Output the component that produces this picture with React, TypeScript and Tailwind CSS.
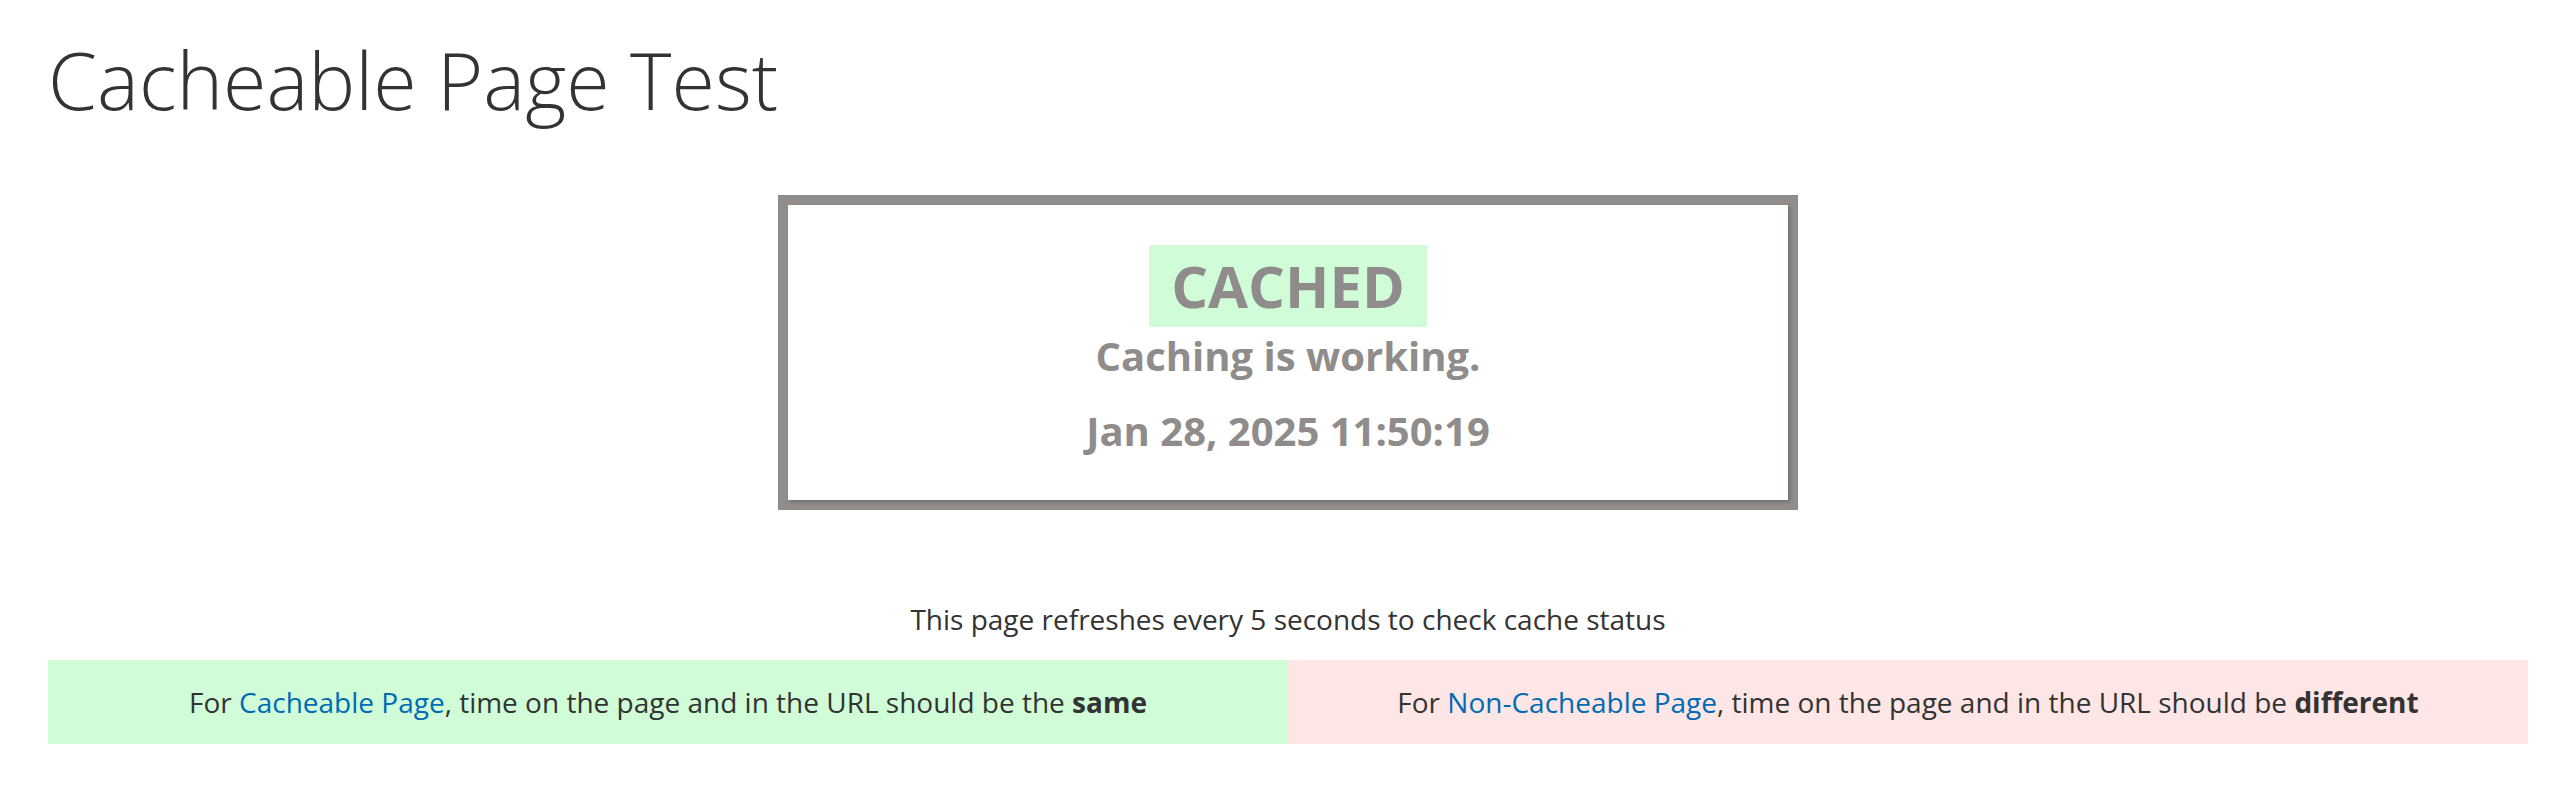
export default function App() {
  return (
    <div className="min-h-screen bg-white pl-[48px] pr-[42px] pt-[36px] font-['Open_Sans','Liberation_Sans',sans-serif] text-[#333333]">
      <h1 className="text-[79px] leading-[88px] font-light">Cacheable Page Test</h1>

      {/* status box */}
      <div className="mx-auto mt-[71px] w-[1020px] bg-[#918d8b] p-[10px]">
        <div className="flex flex-col items-center bg-white pt-[40px] pb-[45px] text-[#8f8c8b] font-bold shadow-[2px_2px_4px_rgba(0,0,0,0.22)]">
          <div className="bg-[#d0fdd8] px-[22px] text-[58px] leading-[82px]">CACHED</div>
          <div className="mt-[5px] text-[40px] leading-[48px]">Caching is working.</div>
          <div className="mt-[27px] text-[40px] leading-[48px]">Jan 28, 2025 11:50:19</div>
        </div>
      </div>

      <p className="mt-[89px] text-center text-[28px] leading-[40px]">
        This page refreshes every 5 seconds to check cache status
      </p>

      <div className="mt-[21px] grid grid-cols-2 text-[28px] leading-[84px]">
        <div className="bg-[#d0fdd8] text-center">
          For <a href="#" className="text-[#006bb4]">Cacheable Page</a>, time on the page and in the URL should be the{' '}
          <strong className="font-bold">same</strong>
        </div>
        <div className="bg-[#fde6e5] text-center">
          For <a href="#" className="text-[#006bb4]">Non-Cacheable Page</a>, time on the page and in the URL should be{' '}
          <strong className="font-bold">different</strong>
        </div>
      </div>
    </div>
  )
}
